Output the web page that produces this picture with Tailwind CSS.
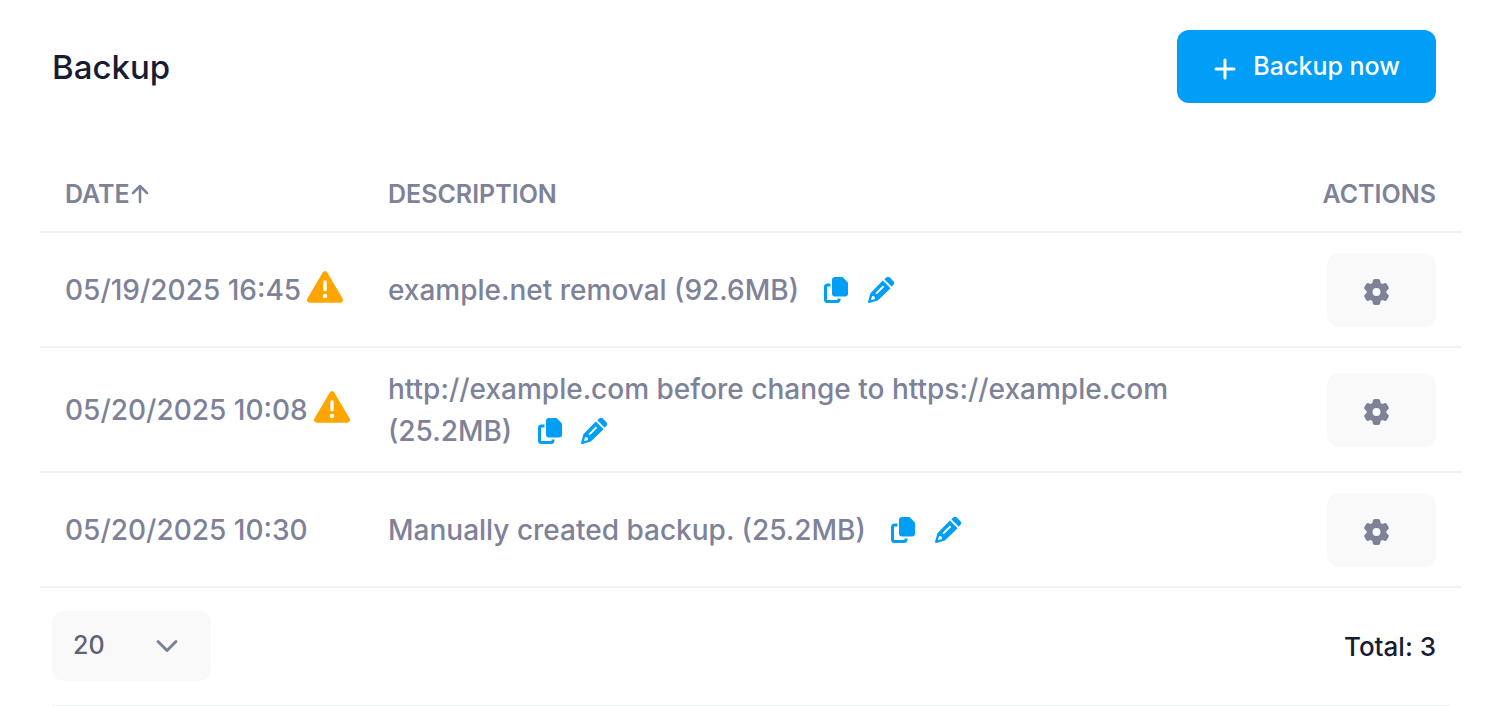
<!DOCTYPE html>
<html lang="en">
<head>
    <meta charset="UTF-8">
    <meta name="viewport" content="width=device-width, initial-scale=1.0">
    <title>Backup</title>
    <script src="https://cdn.jsdelivr.net/npm/@tailwindcss/browser@4"></script>
</head>
<body class="bg-white font-['Inter',sans-serif] font-medium text-[#7e8299]">
    <!-- icons shared by the rows -->
    <svg class="hidden" aria-hidden="true">
        <symbol id="icon-warning" viewBox="0 0 512 512">
            <path d="M256 32c14.2 0 27.3 7.5 34.5 19.8l216 368c7.3 12.4 7.3 27.7 .2 40.1S486.3 480 472 480H40c-14.3 0-27.6-7.7-34.7-20.1s-7-27.8 .2-40.1l216-368C228.7 39.5 241.8 32 256 32zm0 128c-13.3 0-24 10.7-24 24V296c0 13.3 10.7 24 24 24s24-10.7 24-24V184c0-13.3-10.7-24-24-24zm32 224a32 32 0 1 0 -64 0 32 32 0 1 0 64 0z" fill="currentColor"/>
        </symbol>
        <symbol id="icon-copy" viewBox="0 0 24 26">
            <path d="M11 0h7.500l5.500 5.500V16.500a3 3 0 0 1-3 3H11a3 3 0 0 1-3-3V3a3 3 0 0 1 3-3z" fill="currentColor"/>
            <path d="M6.500 8H3.500a2 2 0 0 0-2 2V22.500a2 2 0 0 0 2 2H13a2 2 0 0 0 2-2V21.500" fill="none" stroke="currentColor" stroke-width="3"/>
        </symbol>
        <symbol id="icon-pencil" viewBox="0 0 26 26">
            <path fill-rule="evenodd" d="M14.800 3.400L22.600 11.200 9.800 23.600 1.500 25.900A1.200 1.200 0 0 1 .1 24.500L2.400 16.200zM14.800 8.500L7.400 15.900 8.800 17.300 16.200 9.900zM4.200 19L3 22.400 3.700 23.100 7 21.900 6.600 19.400z" fill="currentColor"/>
            <path d="M16.300 2.200L17.900 .8a3 3 0 0 1 4.200 0L25.200 3.900a3 3 0 0 1 0 4.200L23.800 9.700z" fill="currentColor"/>
        </symbol>
        <symbol id="icon-gear" viewBox="0 0 25 26">
            <path fill-rule="evenodd" d="M10.800 0h3.400a2 2 0 0 1 2 1.700L16.600 3.900 18.300 4.900 20.400 4.200a2 2 0 0 1 2.400 .9L24.500 8a2 2 0 0 1-.4 2.500L22.400 12V14L24.100 15.500a2 2 0 0 1 .4 2.500L22.800 20.900a2 2 0 0 1-2.400 .9L18.300 21.100 16.600 22.100 16.200 24.300a2 2 0 0 1-2 1.700h-3.400a2 2 0 0 1-2-1.700L8.400 22.100 6.700 21.100 4.600 21.800a2 2 0 0 1-2.400-.9L.5 18a2 2 0 0 1 .4-2.500L2.600 14V12L.9 10.500A2 2 0 0 1 .5 8L2.200 5.100a2 2 0 0 1 2.400-.9L6.700 4.900 8.400 3.900 8.800 1.700a2 2 0 0 1 2-1.700zM12.500 9a4 4 0 1 0 0 8 4 4 0 1 0 0-8z" fill="currentColor"/>
        </symbol>
    </svg>

    <div class="pt-[30px] pr-[38px] pl-10">
        <div class="flex items-center justify-between pr-[26px] pl-3">
            <h1 class="text-[33px] leading-[40px] text-[#181c32]">Backup</h1>
            <button type="button" class="flex h-[73px] items-center gap-4 rounded-xl bg-[#009ef7] px-9 text-[25px] text-white">
                <svg class="mt-1 size-6" viewBox="0 0 24 24" fill="none" stroke="currentColor" stroke-width="3" stroke-linecap="round">
                    <path d="M12 3v18M3 12h18"/>
                </svg>
                Backup now
            </button>
        </div>

        <table class="mt-[49px] w-full border-collapse text-left text-[28px] leading-[42px]">
            <thead>
                <tr class="h-[80px] border-b-2 border-[#f1f1f2] text-[25px]">
                    <th class="w-[348px] pt-1 pl-[25px] font-semibold">
                        <span class="flex items-center">DATE<svg class="size-[20px]" viewBox="0 0 20 20" fill="none" stroke="currentColor" stroke-width="2.500" stroke-linecap="round" stroke-linejoin="round" role="img" aria-label="ascending">
                            <path d="M10 18V2M3 9l7-7 7 7"/>
                        </svg></span>
                    </th>
                    <th class="pt-1 font-semibold">DESCRIPTION</th>
                    <th class="w-[240px] pt-1 pr-[26px] text-right font-semibold">ACTIONS</th>
                </tr>
            </thead>
            <tbody>
                <tr class="h-[115px] border-b-2 border-[#f1f1f2]">
                    <td class="pl-[25px]">
                        <span class="flex items-center gap-1.5">05/19/2025 16:45 <svg class="mb-1.5 size-9 text-[#ffa500]" role="img" aria-label="Warning"><use href="#icon-warning"/></svg></span>
                    </td>
                    <td>
                        example.net removal (92.6MB)
                        <button type="button" aria-label="Copy" class="ml-[18px] align-middle text-[#009ef7]"><svg class="mb-1 h-[26px] w-6"><use href="#icon-copy"/></svg></button>
                        <button type="button" aria-label="Edit" class="ml-3 align-middle text-[#009ef7]"><svg class="mb-1 size-[26px]"><use href="#icon-pencil"/></svg></button>
                    </td>
                    <td class="pr-[26px]">
                        <button type="button" aria-label="Actions" class="ml-auto flex h-[74px] w-[109px] items-center rounded-xl bg-[#f9f9f9] pt-1 pl-[37px]"><svg class="h-[26px] w-[25px]"><use href="#icon-gear"/></svg></button>
                    </td>
                </tr>
                <tr class="h-[125px] border-b-2 border-[#f1f1f2]">
                    <td class="pl-[25px]">
                        <span class="flex items-center gap-1.5">05/20/2025 10:08 <svg class="mb-1.5 size-9 text-[#ffa500]" role="img" aria-label="Warning"><use href="#icon-warning"/></svg></span>
                    </td>
                    <td>
                        http://example.com before change to https://example.com (25.2MB)
                        <button type="button" aria-label="Copy" class="ml-[18px] align-middle text-[#009ef7]"><svg class="mb-1 h-[26px] w-6"><use href="#icon-copy"/></svg></button>
                        <button type="button" aria-label="Edit" class="ml-3 align-middle text-[#009ef7]"><svg class="mb-1 size-[26px]"><use href="#icon-pencil"/></svg></button>
                    </td>
                    <td class="pr-[26px]">
                        <button type="button" aria-label="Actions" class="ml-auto flex h-[74px] w-[109px] items-center rounded-xl bg-[#f9f9f9] pt-1 pl-[37px]"><svg class="h-[26px] w-[25px]"><use href="#icon-gear"/></svg></button>
                    </td>
                </tr>
                <tr class="h-[115px] border-b-2 border-[#f1f1f2]">
                    <td class="pl-[25px]">05/20/2025 10:30</td>
                    <td>
                        Manually created backup. (25.2MB)
                        <button type="button" aria-label="Copy" class="ml-[18px] align-middle text-[#009ef7]"><svg class="mb-1 h-[26px] w-6"><use href="#icon-copy"/></svg></button>
                        <button type="button" aria-label="Edit" class="ml-3 align-middle text-[#009ef7]"><svg class="mb-1 size-[26px]"><use href="#icon-pencil"/></svg></button>
                    </td>
                    <td class="pr-[26px]">
                        <button type="button" aria-label="Actions" class="ml-auto flex h-[74px] w-[109px] items-center rounded-xl bg-[#f9f9f9] pt-1 pl-[37px]"><svg class="h-[26px] w-[25px]"><use href="#icon-gear"/></svg></button>
                    </td>
                </tr>
            </tbody>
        </table>

        <div class="mx-3 flex items-center justify-between border-b border-[#eff2f5] pt-[23px] pr-3.5 pb-6">
            <div class="grid items-center">
                <select aria-label="Rows per page" class="col-start-1 row-start-1 h-[70px] w-[159px] appearance-none rounded-xl bg-[#f9f9f9] pl-[21px] text-[25px] text-[#5e6278]">
                    <option>10</option>
                    <option selected>20</option>
                    <option>50</option>
                </select>
                <svg class="pointer-events-none col-start-1 row-start-1 mr-8 size-6 justify-self-end" viewBox="0 0 24 24" fill="none" stroke="#7e8299" stroke-width="3" stroke-linecap="round" stroke-linejoin="round">
                    <path d="M3 7.500l9 9 9-9"/>
                </svg>
            </div>
            <p class="text-[26px] text-[#181c32]">Total: 3</p>
        </div>
    </div>
</body>
</html>
